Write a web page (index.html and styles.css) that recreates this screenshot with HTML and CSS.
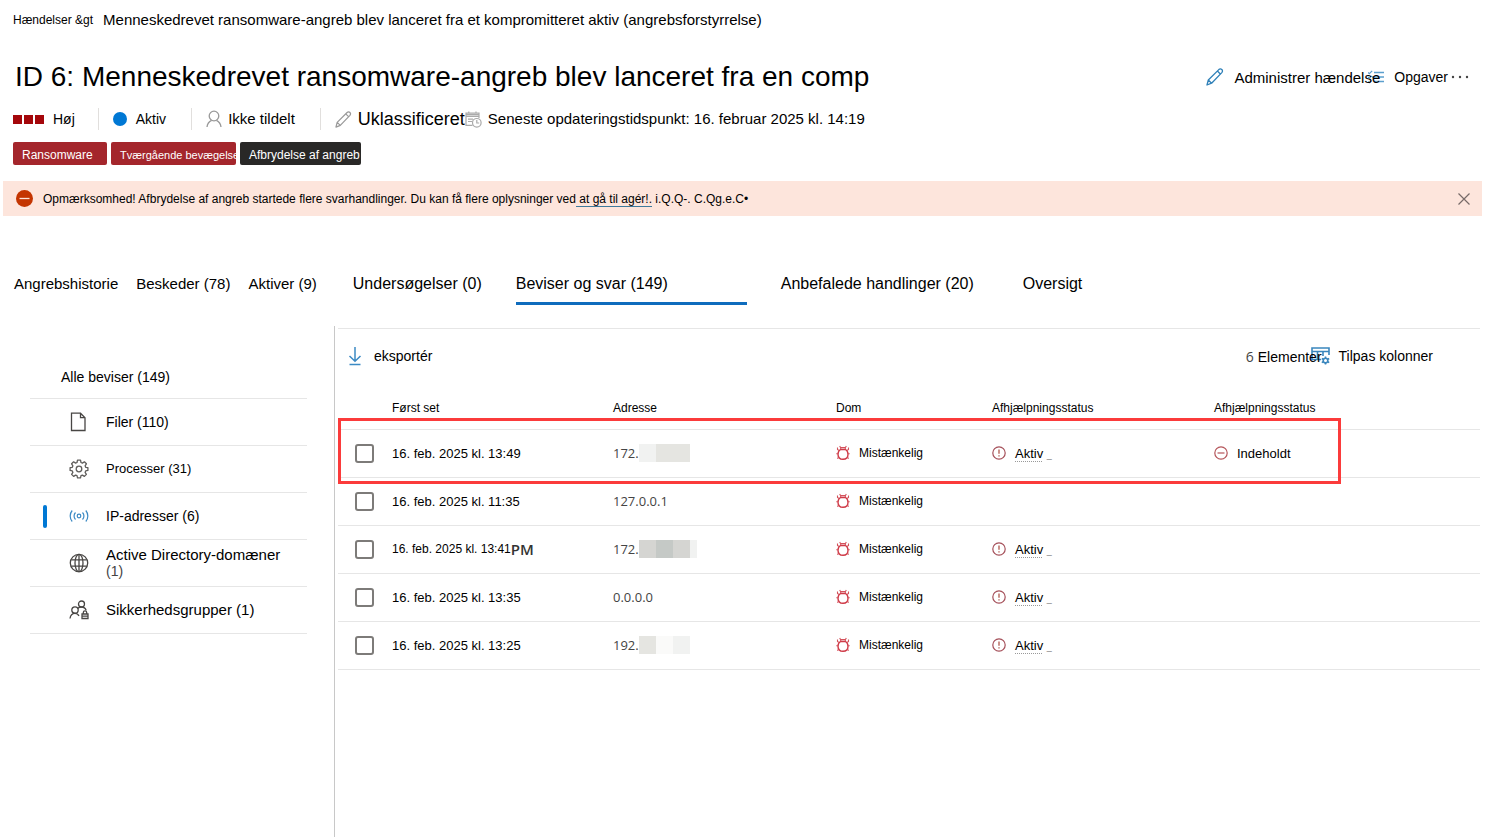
FILE: index.html
```
<!DOCTYPE html>
<html lang="da">
<head>
    <meta charset="UTF-8">
    <meta name="viewport" content="width=device-width, initial-scale=1.0">
    <title>ID 6: Menneskedrevet ransomware-angreb</title>
    <link rel="stylesheet" href="styles.css">
</head>
<body>
    <!-- Shared icons -->
    <svg class="sprite" aria-hidden="true">
        <symbol id="bug" viewBox="0 0 14 16">
            <path d="M4.500 4.500h5C11.200 5.500 12 7 12 9.200c0 3-2 5.100-5 5.100S2 12.200 2 9.200C2 7 2.800 5.500 4.500 4.500z" fill="none" stroke="#cf3b48" stroke-width="1.400"/>
            <path d="M4.700 4.300V2.600h4.600v1.700M4.500 2.500L3.700 1M9.500 2.500l.8-1.500M3 5.500L1.500 4.500V2.500M11 5.500l1.500-1V2.500M2 8.700H.3M12 8.700h1.700M3 12.200l-1.700 1.300M11 12.200l1.700 1.300" fill="none" stroke="#d4525c" stroke-width="1.100"/>
        </symbol>
        <symbol id="alert" viewBox="0 0 14 14">
            <circle cx="7" cy="7" r="6.200" fill="none" stroke="#a5505a" stroke-width="1.200"/>
            <path d="M7 3.500v4.300M7 9.200v1.400" stroke="#b5655a" stroke-width="1.400"/>
        </symbol>
        <symbol id="pencil" viewBox="0 0 18 18">
            <path d="M1 17l1.300-5L12.800 1.600c1-.9 2.300-.8 3 0 .9.800.9 2 0 3L5.600 15.200zM2.300 12l3.300 3.200M11.400 3l3.200 3.200" fill="none" stroke="currentColor" stroke-width="1.300" stroke-linejoin="round"/>
        </symbol>
    </svg>

    <header class="header">
        <nav class="breadcrumb">
            <a href="#" class="breadcrumb-root">Hændelser &amp;gt</a>
            <span>Menneskedrevet ransomware-angreb blev lanceret fra et kompromitteret aktiv (angrebsforstyrrelse)</span>
        </nav>

        <div class="title-row">
            <h1>ID 6: Menneskedrevet ransomware-angreb blev lanceret fra en comp</h1>
            <div class="actions">
                <button class="action manage">
                    <svg class="blue" width="18" height="18"><use href="#pencil"/></svg>
                    Administrer hændelse
                </button>
                <button class="action tasks">
                    <svg width="16" height="14" viewBox="0 0 16 14" fill="none" stroke="#5b9fcd">
                        <path d="M6 2.500h10M4 7h12M6 11.500h10" stroke-width="1.500"/>
                        <path d="M0 2.500l1.300 1.200L4.200.8M0 7l1.300 1.200L3.600 6M0 11.500l1.300 1.200L3.600 10.500" stroke-width="1.200"/>
                    </svg>
                    Opgaver
                </button>
                <button class="more" aria-label="Flere handlinger">
                    <svg width="20" height="4" viewBox="0 0 20 4" fill="#444"><circle cx="3" cy="2" r="1.200"/><circle cx="10" cy="2" r="1.200"/><circle cx="17" cy="2" r="1.200"/></svg>
                </button>
            </div>
        </div>

        <div class="meta">
            <div class="meta-item severity">
                <span class="squares"><i></i><i></i><i></i></span>
                Høj
            </div>
            <div class="meta-item divided">
                <span class="dot"></span>
                Aktiv
            </div>
            <div class="meta-item divided assigned">
                <svg width="16" height="18" viewBox="0 0 16 18" fill="none" stroke="#999" stroke-width="1.300"><circle cx="8" cy="6" r="4.800"/><path d="M1 17c.4-3.400 2.300-5.500 4.600-6.600M15 17c-.4-3.400-2.300-5.500-4.600-6.600"/></svg>
                Ikke tildelt
            </div>
            <div class="meta-item divided classification">
                <svg class="gray" width="17" height="17"><use href="#pencil"/></svg>
                Uklassificeret
            </div>
            <div class="meta-item updated">
                <svg width="17" height="17" viewBox="0 0 17 17" fill="none" stroke="#aaa" stroke-width="1.200"><path d="M7.500 14.400H1V2.200h13V7M1 3.600h13M1 5.400h13M3.800.5v2M11 .5v2M3 8.200h5M3 10.500h4"/><circle cx="11.800" cy="11.800" r="4.300"/><path d="M11.800 9v3h2.400"/></svg>
                Seneste opdateringstidspunkt: 16. februar 2025 kl. 14:19
            </div>
        </div>

        <div class="tags">
            <span class="tag tag-ransomware">Ransomware</span>
            <span class="tag tag-lateral">Tværgående bevægelse</span>
            <span class="tag tag-disruption">Afbrydelse af angreb</span>
        </div>
    </header>

    <div class="banner" role="alert">
        <svg width="17" height="17" viewBox="0 0 17 17"><circle cx="8.500" cy="8.500" r="8.500" fill="#c43501"/><path d="M3.500 8.500h10" stroke="#fde3d9" stroke-width="1.300"/></svg>
        <p>Opmærksomhed! Afbrydelse af angreb startede flere svarhandlinger. Du kan få flere oplysninger ved<a href="#">&nbsp;at gå til agér!.</a> i.Q.Q-. C.Qg.e.C•</p>
        <button class="close" aria-label="Luk">
            <svg width="12" height="12" viewBox="0 0 12 12"><path d="M.5.5l11 11M11.500.5l-11 11" stroke="#776b68" stroke-width="1.200"/></svg>
        </button>
    </div>

    <nav class="tabs">
        <div class="tab-group small">
            <a href="#">Angrebshistorie</a>
            <a href="#">Beskeder (78)</a>
            <a href="#">Aktiver (9)</a>
        </div>
        <div class="tab-group">
            <a href="#">Undersøgelser (0)</a>
            <a href="#" class="selected" aria-current="page">Beviser og svar (149)</a>
            <a href="#" class="recommended">Anbefalede handlinger (20)</a>
            <a href="#">Oversigt</a>
        </div>
    </nav>

    <div class="content">
        <aside class="sidebar">
            <a href="#" class="filter all">Alle beviser (149)</a>
            <a href="#" class="filter">
                <svg width="20" height="20" viewBox="0 0 20 20" fill="none" stroke="#484644" stroke-width="1.300"><path d="M2.500 1.200h9L16 5.700v12.800H2.500zM11.500 1.200v4.500H16"/></svg>
                Filer (110)
            </a>
            <a href="#" class="filter compact">
                <svg width="20" height="20" viewBox="0 0 20 20" fill="none" stroke="#605e5c" stroke-width="1.300"><circle cx="10" cy="10" r="2.800"/><path d="M8.500 1.200h3l.5 2.300 1.400.6 2-1.300 2 2-1.300 2 .6 1.500 2.200.4v2.700l-2.200.5-.6 1.500 1.300 2-2 2-2-1.300-1.400.6-.5 2.200h-3L8 16.700l-1.400-.6-2 1.300-2-2 1.300-2-.6-1.500-2.200-.5V8.700l2.200-.4.600-1.500-1.300-2 2-2 2 1.300L8 3.500z" stroke-linejoin="round"/></svg>
                Processer (31)
            </a>
            <a href="#" class="filter active">
                <svg width="20" height="20" viewBox="0 0 20 20" fill="none" stroke="#3c8ac4" stroke-width="1.200"><circle cx="10" cy="10" r="1.800"/><path d="M6.500 6.500a5 5 0 0 0 0 7M13.500 6.500a5 5 0 0 1 0 7M3.200 4.500a8.500 8.500 0 0 0 0 11M16.800 4.500a8.500 8.500 0 0 1 0 11"/></svg>
                IP-adresser (6)
            </a>
            <a href="#" class="filter wide">
                <svg width="20" height="20" viewBox="0 0 20 20" fill="none" stroke="#484644" stroke-width="1.300"><circle cx="10" cy="10" r="8.700"/><ellipse cx="10" cy="10" rx="4" ry="8.700"/><path d="M10 1.300v17.400M2.200 6.800h15.600M2.200 13.200h15.600"/></svg>
                <span>Active Directory-domæner <span class="count">(1)</span></span>
            </a>
            <a href="#" class="filter wide">
                <svg width="20" height="20" viewBox="0 0 20 20" fill="none" stroke="#484644" stroke-width="1.300"><circle cx="12.500" cy="4" r="3"/><circle cx="6" cy="10" r="3.200"/><path d="M1 18.500c.4-3 2.200-5.200 5-5.200 1.800 0 3.200 1 4 2.600M8.600 8.500c1-1 2.300-1.500 3.900-1.500 2.300 0 3.900 1.200 4.600 3.200"/><path d="M13 14h6v4.500h-6zM14.300 14v-1.500a1.700 1.700 0 0 1 3.400 0V14M13 16.200h6"/></svg>
                Sikkerhedsgrupper (1)
            </a>
        </aside>

        <main class="main">
            <div class="toolbar">
                <button class="export">
                    <svg width="14" height="19" viewBox="0 0 14 19" fill="none" stroke="#3c8ac4" stroke-width="1.500"><path d="M7 0v14M1.500 9L7 14.300 12.500 9M1.500 17.500h11"/></svg>
                    eksportér
                </button>
                <span class="item-count"><b>6</b> Elementer</span>
                <button class="columns">
                    <svg width="19" height="18" viewBox="0 0 19 18" fill="none" stroke="#3a86bd" stroke-width="1.600"><path d="M10 12.500H1V1h17v7M1 4.500h17M6.500 4.500v8M12 4.500V9"/><circle cx="14.500" cy="13.500" r="2.300"/><path d="M14.500 9.500v1.500M14.500 16v1.500M10.800 11.500l1.400.8M16.800 14.800l1.400.8M18.200 11.500l-1.400.8M12.200 14.800l-1.400.8"/></svg>
                    Tilpas kolonner
                </button>
            </div>

            <div class="table-wrap">
                <table>
                    <thead>
                        <tr>
                            <th class="col-check"></th>
                            <th class="col-seen">Først set</th>
                            <th class="col-address">Adresse</th>
                            <th class="col-verdict">Dom</th>
                            <th class="col-status">Afhjælpningsstatus</th>
                            <th>Afhjælpningsstatus</th>
                        </tr>
                    </thead>
                    <tbody>
                        <tr>
                            <td><input type="checkbox" aria-label="Vælg 16. feb. 2025 kl. 13:49"></td>
                            <td>16. feb. 2025 kl. 13:49</td>
                            <td><span class="address">172.<span class="mask"><i class="m1"></i><i class="m2"></i><i class="m2"></i></span></span></td>
                            <td><span class="cell verdict"><svg width="14" height="16"><use href="#bug"/></svg>Mistænkelig</span></td>
                            <td><span class="cell"><svg width="14" height="14"><use href="#alert"/></svg><span><u>Aktiv</u> <small>_</small></span></span></td>
                            <td><span class="cell"><svg width="14" height="14" viewBox="0 0 14 14" fill="none" stroke="#b5555a" stroke-width="1.200"><circle cx="7" cy="7" r="6.200"/><path d="M3.500 7h7"/></svg>Indeholdt</span></td>
                        </tr>
                        <tr>
                            <td><input type="checkbox" aria-label="Vælg 16. feb. 2025 kl. 11:35"></td>
                            <td>16. feb. 2025 kl. 11:35</td>
                            <td><span class="address">127.0.0.1</span></td>
                            <td><span class="cell verdict"><svg width="14" height="16"><use href="#bug"/></svg>Mistænkelig</span></td>
                            <td></td>
                            <td></td>
                        </tr>
                        <tr>
                            <td><input type="checkbox" aria-label="Vælg 16. feb. 2025 kl. 13:41"></td>
                            <td><span class="date-small">16. feb. 2025 kl. 13:41<b>PM</b></span></td>
                            <td><span class="address">172.<span class="mask"><i class="m3"></i><i class="m4"></i><i class="m3"></i><i class="m1 half"></i></span></span></td>
                            <td><span class="cell verdict"><svg width="14" height="16"><use href="#bug"/></svg>Mistænkelig</span></td>
                            <td><span class="cell"><svg width="14" height="14"><use href="#alert"/></svg><span><u>Aktiv</u> <small>_</small></span></span></td>
                            <td></td>
                        </tr>
                        <tr>
                            <td><input type="checkbox" aria-label="Vælg 16. feb. 2025 kl. 13:35"></td>
                            <td>16. feb. 2025 kl. 13:35</td>
                            <td><span class="address">0.0.0.0</span></td>
                            <td><span class="cell verdict"><svg width="14" height="16"><use href="#bug"/></svg>Mistænkelig</span></td>
                            <td><span class="cell"><svg width="14" height="14"><use href="#alert"/></svg><span><u>Aktiv</u> <small>_</small></span></span></td>
                            <td></td>
                        </tr>
                        <tr>
                            <td><input type="checkbox" aria-label="Vælg 16. feb. 2025 kl. 13:25"></td>
                            <td>16. feb. 2025 kl. 13:25</td>
                            <td><span class="address">192.<span class="mask"><i class="m2"></i><i class="m5"></i><i class="m1"></i></span></span></td>
                            <td><span class="cell verdict"><svg width="14" height="16"><use href="#bug"/></svg>Mistænkelig</span></td>
                            <td><span class="cell"><svg width="14" height="14"><use href="#alert"/></svg><span><u>Aktiv</u> <small>_</small></span></span></td>
                            <td></td>
                        </tr>
                    </tbody>
                </table>
                <div class="highlight"></div>
            </div>
        </main>
    </div>
</body>
</html>
```

FILE: styles.css
```
* {
    box-sizing: border-box;
}
body {
    margin: 0;
    min-height: 100vh;
    display: flex;
    flex-direction: column;
    font-family: "Liberation Sans", Arial, sans-serif;
    font-size: 14px;
    color: #000;
    background: #fff;
}
a {
    color: inherit;
    text-decoration: none;
}
button {
    display: flex;
    align-items: center;
    padding: 0;
    border: none;
    background: none;
    font: inherit;
    color: inherit;
    cursor: pointer;
}
svg {
    flex: none;
}
.sprite {
    display: none;
}

/* Header */
.header {
    padding: 10px 30px 16px 13px;
}
.breadcrumb {
    display: flex;
    align-items: center;
    gap: 10px;
    font-size: 15px;
    line-height: 20px;
}
.breadcrumb-root {
    font-size: 12px;
}
.title-row {
    display: flex;
    align-items: center;
    justify-content: space-between;
    margin-top: 31px;
    padding-left: 2px;
}
h1 {
    margin: 0;
    font-size: 28px;
    font-weight: normal;
    line-height: 32px;
}
.actions {
    display: flex;
    align-items: center;
}
.action {
    gap: 10px;
    white-space: nowrap;
}
.manage {
    position: relative;
    z-index: 1;
    font-size: 15px;
}
.tasks {
    margin-left: -12px;
}
.more {
    margin-left: 2px;
}
.blue {
    color: #2f80b8;
}
.gray {
    color: #999;
}

/* Incident facts */
.meta {
    display: flex;
    align-items: center;
    margin-top: 15px;
    line-height: 22px;
}
.meta-item {
    display: flex;
    align-items: center;
    gap: 9px;
    white-space: nowrap;
}
.severity {
    padding-right: 23px;
}
.divided {
    padding: 0 25px 0 14px;
    border-left: 1px solid #e1dfdd;
}
.squares {
    display: flex;
    gap: 2px;
}
.squares i {
    width: 9px;
    height: 9px;
    background: #a4070b;
}
.dot {
    width: 14px;
    height: 14px;
    border-radius: 50%;
    background: #0078d4;
}
.assigned {
    gap: 6px;
    font-size: 15px;
}
.classification {
    gap: 6px;
    padding-right: 0;
    font-size: 18px;
}
.updated {
    gap: 6px;
    font-size: 15px;
}

/* Tags */
.tags {
    display: flex;
    gap: 4px;
    margin-top: 12px;
}
.tag {
    height: 23px;
    padding-left: 9px;
    border-radius: 2px;
    background: #a4262c;
    color: #fff;
    font-size: 12px;
    line-height: 27px;
    white-space: nowrap;
}
.tag-ransomware {
    width: 94px;
}
.tag-lateral {
    width: 125px;
    font-size: 11px;
}
.tag-disruption {
    width: 121px;
    background: #292827;
}

/* Warning banner */
.banner {
    display: flex;
    align-items: center;
    gap: 10px;
    min-height: 35px;
    margin: 0 18px 0 3px;
    padding: 0 12px 0 13px;
    background: #fde5dc;
    font-size: 12px;
}
.banner p {
    flex: 1;
    margin: 0;
}
.banner a {
    border-bottom: 1px solid #3c7a9c;
}

/* Tabs */
.tabs {
    display: flex;
    gap: 36px;
    margin-top: 52px;
    padding-left: 14px;
    font-size: 16px;
    line-height: 32px;
}
.tab-group {
    display: flex;
    gap: 34px;
}
.tab-group a {
    border-bottom: 3px solid transparent;
    white-space: nowrap;
}
.small {
    gap: 18px;
    font-size: 15px;
}
.tab-group .selected {
    min-width: 231px;
    padding-bottom: 2px;
    border-color: #0f6cbd;
}
.recommended {
    min-width: 208px;
}

/* Evidence */
.content {
    flex: 1;
    display: flex;
    margin-top: 21px;
}
.sidebar {
    width: 335px;
    padding: 29px 27px 0 30px;
    border-right: 1px solid #c8c8c8;
}
.filter {
    position: relative;
    display: flex;
    align-items: center;
    gap: 17px;
    min-height: 47px;
    padding-left: 39px;
    border-bottom: 1px solid #e6e6e6;
    line-height: 16px;
}
.all {
    min-height: 44px;
    padding-left: 31px;
}
.compact {
    font-size: 13px;
}
.wide {
    font-size: 15px;
}
.count {
    display: block;
    color: #444;
    font-size: 14px;
}
.active::before {
    content: "";
    position: absolute;
    left: 13px;
    top: 12px;
    width: 4px;
    height: 23px;
    border-radius: 2px;
    background: #0078d4;
}
.main {
    flex: 1;
    margin: 2px 20px 0 3px;
    border-top: 1px solid #e6e6e6;
}
.toolbar {
    display: flex;
    align-items: center;
    height: 54px;
    padding: 0 47px 0 10px;
}
.export {
    gap: 12px;
}
.item-count {
    position: relative;
    z-index: 1;
    margin-left: auto;
}
.item-count b {
    color: #444;
    font-family: "Open Sans", sans-serif;
    font-weight: normal;
}
.columns {
    gap: 9px;
    margin-left: -11px;
}

/* Table */
.table-wrap {
    position: relative;
}
table {
    width: 100%;
    border-collapse: collapse;
    table-layout: fixed;
    font-size: 13px;
}
th {
    height: 46px;
    padding: 4px 0 0;
    font-size: 12px;
    font-weight: normal;
    text-align: left;
}
td {
    height: 48px;
    padding: 0;
    border-top: 1px solid #e6e6e6;
    border-bottom: 1px solid #e6e6e6;
}
.col-check {
    width: 54px;
}
.col-seen {
    width: 221px;
}
.col-address {
    width: 223px;
}
.col-verdict {
    width: 156px;
}
.col-status {
    width: 222px;
}
input[type="checkbox"] {
    appearance: none;
    display: block;
    width: 19px;
    height: 19px;
    margin: 0 0 0 17px;
    border: 2px solid #7d7b79;
    border-radius: 3px;
    background: #fff;
}
input[type="checkbox"]:checked {
    background: #0078d4;
}
.date-small {
    display: flex;
    align-items: center;
    font-size: 12px;
}
.date-small b {
    color: #333;
    font-family: "Open Sans", sans-serif;
    font-size: 15px;
    font-weight: 600;
    line-height: 16px;
}
.address {
    display: flex;
    align-items: center;
    color: #444;
    font-family: "Open Sans", sans-serif;
}
.mask {
    display: flex;
}
.mask i {
    width: 17px;
    height: 18px;
}
.mask .half {
    width: 7px;
}
.m1 {
    background: #f1f2f1;
}
.m2 {
    background: #e5e5e1;
}
.m3 {
    background: #d5d5d2;
}
.m4 {
    background: #c5c9c6;
}
.m5 {
    background: #fafaf9;
}
.cell {
    display: flex;
    align-items: center;
    gap: 9px;
}
.verdict {
    font-size: 12px;
}
.cell u {
    text-decoration: underline dotted #999 1px;
    text-underline-offset: 3px;
}
.cell small {
    color: #777;
    font-size: 9px;
}
/* Frame around the contained address */
.highlight {
    position: absolute;
    top: 35px;
    left: 0;
    right: 139px;
    height: 66px;
    border: 3px solid #fb3b3b;
    pointer-events: none;
}
```
